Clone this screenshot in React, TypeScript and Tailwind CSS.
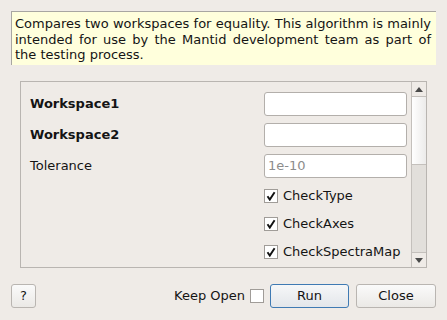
import React from "react";

const font = { fontFamily: '"DejaVu Sans", "Liberation Sans", sans-serif' };

function CheckBox({ checked }: { checked: boolean }) {
  return (
    <span className="flex h-[14px] w-[14px] items-center justify-center border border-[#a09c98] bg-white">
      {checked && (
        <svg width="10" height="10" viewBox="0 0 10 10">
          <path d="M1.5 5.2 L3.8 8.6 L8.6 1.2" fill="none" stroke="#111" strokeWidth="1.9" />
        </svg>
      )}
    </span>
  );
}

function TextBox({ placeholder }: { placeholder?: string }) {
  return (
    <div className="flex h-[24px] w-[143px] items-center rounded-[3px] border border-[#b3afab] bg-white px-[3px] text-[13px] text-[#8c8c8c]">
      {placeholder}
    </div>
  );
}

function Scrollbar() {
  return (
    <div className="flex w-[15px] flex-col border-l border-[#c4c0bc] bg-[#e2dfdb]">
      <div className="flex h-[15px] items-center justify-center border-b border-[#c4c0bc] bg-[#efebe7]">
        <svg width="8" height="5" viewBox="0 0 8 5">
          <path d="M0 5 L4 0 L8 5 Z" fill="#4a4a4a" />
        </svg>
      </div>
      <div className="h-[68px] border-b border-[#c4c0bc] bg-gradient-to-r from-white to-[#ecebea]" />
      <div className="flex-1" />
      <div className="flex h-[15px] items-center justify-center border-t border-[#c4c0bc] bg-[#efebe7]">
        <svg width="8" height="5" viewBox="0 0 8 5">
          <path d="M0 0 L8 0 L4 5 Z" fill="#4a4a4a" />
        </svg>
      </div>
    </div>
  );
}

export default function App() {
  const checks = ["CheckType", "CheckAxes", "CheckSpectraMap"];
  return (
    <div className="flex h-[320px] w-[447px] flex-col bg-[#efebe7] text-[13px] text-[#141414]" style={font}>
      <div className="ml-[11px] mt-[11px] h-[54px] w-[425px] border-l border-t border-[#a8a6a2] bg-[#ffffdc] pl-[3px] pr-[5px] pt-[4px] text-justify leading-[15.5px]">
        Compares two workspaces for equality. This algorithm is mainly intended for use by the Mantid
        development team as part of the testing process.
      </div>

      <div className="ml-[20px] mt-[16px] flex h-[187px] w-[407px] border border-[#b9b5b1]">
        <div className="flex flex-1 flex-col pl-[9px] pr-[4px] pt-[10px]">
          <div className="flex flex-col gap-[7px]">
            <div className="flex h-[24px] items-center justify-between">
              <span className="font-bold">Workspace1</span>
              <TextBox />
            </div>
            <div className="flex h-[24px] items-center justify-between">
              <span className="font-bold">Workspace2</span>
              <TextBox />
            </div>
            <div className="flex h-[24px] items-center justify-between">
              <span>Tolerance</span>
              <TextBox placeholder="1e-10" />
            </div>
          </div>
          <div className="mt-[4px] flex flex-col pl-[234px]">
            {checks.map((c) => (
              <div key={c} className="flex h-[28px] items-center gap-[5px]">
                <CheckBox checked />
                <span>{c}</span>
              </div>
            ))}
          </div>
        </div>
        <Scrollbar />
      </div>

      <div className="mx-[11px] mt-[16px] flex h-[24px] items-center justify-between">
        <button className="h-[24px] w-[25px] rounded-[3px] border border-[#b9b5b1] bg-gradient-to-b from-[#fafafa] to-[#ebe9e6] text-[13px]">
          ?
        </button>
        <div className="flex items-center">
          <span className="mr-[5px]">Keep Open</span>
          <CheckBox checked={false} />
          <button className="ml-[6px] h-[24px] w-[79px] rounded-[3px] border border-[#3f7ab3] bg-gradient-to-b from-[#f6f7f8] to-[#e3e6ea]">
            Run
          </button>
          <button className="ml-[7px] h-[24px] w-[80px] rounded-[3px] border border-[#b9b5b1] bg-gradient-to-b from-[#fafafa] to-[#ebe9e6]">
            Close
          </button>
        </div>
      </div>
    </div>
  );
}
